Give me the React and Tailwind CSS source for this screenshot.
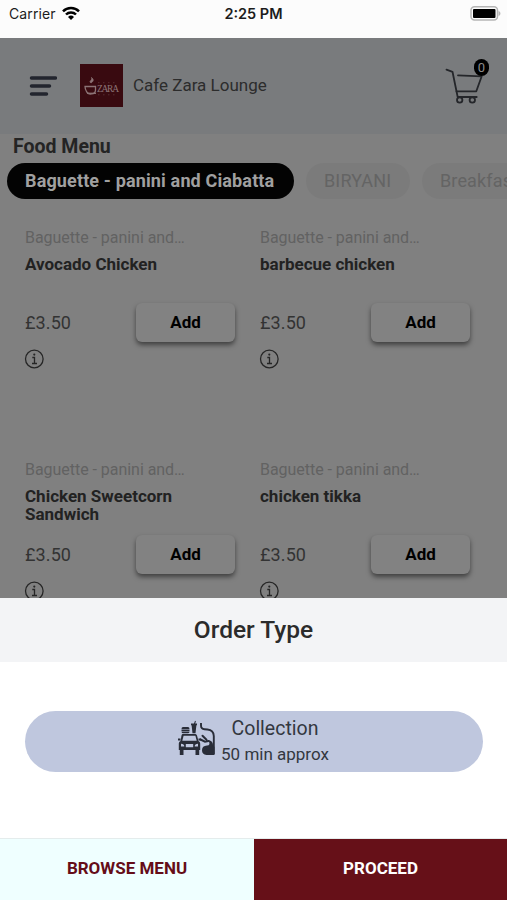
import React from 'react'

const categories = ['Baguette - panini and Ciabatta', 'BIRYANI', 'Breakfast']

const rows = [
  [
    { name: 'Avocado Chicken', price: '£3.50' },
    { name: 'barbecue chicken', price: '£3.50' }
  ],
  [
    { name: 'Chicken Sweetcorn Sandwich', price: '£3.50' },
    { name: 'chicken tikka', price: '£3.50' }
  ]
]

function StatusBar() {
  return (
    <div className="grid h-[38px] shrink-0 grid-cols-3 items-start bg-[#fcfcfc] pt-[5px] font-[Inter] text-[14px] leading-[18px] text-[#1c1c1c]">
      <div className="flex items-center gap-[6px] pl-[9px]">
        <span className="tracking-[0.1px]">Carrier</span>
        <svg viewBox="0 0 18 14" className="-mt-[3px] h-[14px] w-[18px]" fill="none" stroke="#000" strokeWidth="2.5">
          <path d="M1 5.300a11.300 11.300 0 0 1 16 0" />
          <path d="M4 8.500a7 7 0 0 1 10 0" />
          <path d="M9 14l-3-3.100a4.300 4.300 0 0 1 6 0z" fill="#000" stroke="none" />
        </svg>
      </div>
      <div className="text-center text-[14.5px] font-semibold whitespace-nowrap">2:25 PM</div>
      <div className="flex justify-end pt-[0.5px] pr-[6px]">
        <svg viewBox="0 0 31 15" className="h-[15px] w-[31px]">
          <rect x="1" y="0.8" width="26.500" height="13.200" rx="3.500" fill="#fcfcfc" stroke="#b5b5b5" strokeWidth="1.500" />
          <rect x="3" y="3" width="22.500" height="9" rx="1" fill="#000" />
          <path d="M28.500 5v5c1.600-.7 1.900-1.600 1.900-2.500s-.300-1.800-1.900-2.500z" fill="#b5b5b5" />
        </svg>
      </div>
    </div>
  )
}

function Logo() {
  return (
    <svg viewBox="0 0 43 43" className="ml-[23px] h-[43px] w-[43px]">
      <rect width="43" height="43" fill="#390a10" />
      <g fill="none" stroke="#8c7375" strokeWidth="1.300">
        <path d="M5 22.500h10.500v3.500c0 5-7.500 5-9 1.500-.8-1.500-1.500-3-1.500-5z" />
        <path d="M7 29.300h9" />
        <path d="M11 19c-3-2 2-2.500.500-5.500 3 2.500 1.500 4-.500 5.500z" fill="#8c7375" strokeWidth="0.8" />
      </g>
      <text x="17" y="28" textLength="22" fontFamily="Liberation Serif, serif" fontSize="9.500" fill="#8c7375">ZARA</text>
      <path d="M18 18.700h19M18 30.800h19" stroke="#5e363a" strokeWidth="0.8" strokeDasharray="1.500 3.500" />
    </svg>
  )
}

function Cart() {
  return (
    <div className="relative ml-auto h-[47px] w-[46px]">
      <svg viewBox="0 -1 46 47" className="h-[47px] w-[46px]" fill="none" stroke="#24262a" strokeWidth="1.800" strokeLinecap="round" strokeLinejoin="round">
        <path d="M1.500 6.600l6 2.200L11.500 28.300l1.200 5.700h19" />
        <path d="M13 12.300l23.700 1-5.400 15H11.500" />
        <circle cx="14.700" cy="37" r="2.700" />
        <circle cx="27.300" cy="37" r="2.700" />
      </svg>
      <div className="absolute top-[-3px] left-[29px] flex h-[17px] w-[15px] items-center justify-center rounded-full bg-black text-[13px] text-[#8c8c8c]">0</div>
    </div>
  )
}

function InfoIcon() {
  return (
    <svg viewBox="0 0 20 20" className="mt-[7px] -ml-px h-[20px] w-[20px]" fill="none" stroke="#262626" strokeWidth="1.300">
      <circle cx="10.300" cy="10" r="8.800" />
      <path d="M8.300 8.500h2.200v5.800M8 14.500h5" />
      <circle cx="10.300" cy="5.600" r="1.100" fill="#262626" stroke="none" />
    </svg>
  )
}

function MenuItem({ item }) {
  return (
    <div className="flex h-[232px] w-[235px] flex-col">
      <div className="text-[16px] leading-[20px] tracking-[-0.04px] text-[#626262]">Baguette - panini and…</div>
      <div className="mt-[7px] h-[48px] w-[180px] text-[17px] leading-[18px] font-bold text-[#222]">{item.name}</div>
      <div className="flex items-center">
        <div className="w-[111px] text-[18px] tracking-[0.1px] text-[#333]">{item.price}</div>
        <button className="h-[39px] w-[99px] rounded-[6px] bg-[#828282] text-[17px] font-bold text-black shadow-[0_3px_5px_rgba(0,0,0,0.5)]">
          Add
        </button>
      </div>
      <InfoIcon />
    </div>
  )
}

function CollectionIcon() {
  return (
    <svg viewBox="0 0 38 36" className="mb-[8px] h-[36px] w-[38px]" fill="#292d38">
      <path d="M4.500 9q0-2 1.500-2h5q1.500 0 1.500 2zM4.500 9.600h8v1.300h-8zM4.500 11.500h8q0 1.800-1.300 1.800H5.800q-1.300 0-1.300-1.800z" />
      <path d="M14 3.500h3L18 .8l.9.400-.7 2.300H20v1.800h-.6l-.9 8h-3l-.9-8H14z" />
      <path
        fillRule="evenodd"
        d="M5.500 14h13q1 0 1.500 1.500l1.500 5.500q1.700.7 1.700 2.500v6.500h-1v5h-3.700v-5H6.500v5H2.800v-5h-1v-6.500q0-1.800 1.700-2.500L4.500 15.500q.300-1.500 1-1.500zM6.600 15.700l-1.300 5.100h14.400l-1.300-5.100zM4 23.700v2.800h3.300q0-2.800-3.300-2.800zM21 23.700q-3.300 0-3.300 2.800H21zM8.800 24v3.300h7.400V24z"
      />
      <path d="M1 18.500h2.500v2H1zM21.500 18.500H24v2h-2.500z" />
      <path d="M24 3v2.500q0 3.500 3.500 3.700l3 .300q6 .500 6.300 6.500v18" fill="none" stroke="#292d38" strokeWidth="1.900" />
      <path d="M23.500 19.500l4.500 2.200 3.500-.7M25.500 15.800l4 4" fill="none" stroke="#292d38" strokeWidth="2" strokeLinecap="round" />
      <path d="M31.500 20q4.500 1 4.500 5l1.500 2v8H29.500q-4.500-.5-4.500-4.800t5-4.700q2 0 2.500-1.500-.2-2-1-4z" />
    </svg>
  )
}

function OrderSheet() {
  return (
    <div className="flex h-[302px] shrink-0 flex-col bg-white">
      <div className="flex h-[64px] items-center justify-center bg-[#f3f4f6] text-[24.5px] font-medium text-[#2b2b2b]">Order Type</div>
      <div className="flex flex-1 flex-col px-[25px] pt-[49px]">
        <button className="flex h-[61px] w-[458px] items-center rounded-full bg-[#bfc7de] pl-[152px] text-[#333740]">
          <CollectionIcon />
          <div className="ml-[6px] w-[108px] text-center whitespace-nowrap">
            <div className="text-[19.5px] leading-[26px]">Collection</div>
            <div className="text-[17px] leading-[25px]">50 min approx</div>
          </div>
        </button>
      </div>
      <div className="flex h-[62px] border-t border-[#e4ecec] text-[17px] font-bold">
        <button className="w-[254px] bg-[#efffff] pb-[2px] text-[#650d18]">BROWSE MENU</button>
        <button className="flex-1 bg-[#661018] pb-[2px] text-white">PROCEED</button>
      </div>
    </div>
  )
}

export default function App() {
  return (
    <div className="flex h-[900px] w-[507px] flex-col overflow-hidden bg-[#808080] font-[Roboto,sans-serif]">
      <StatusBar />
      <header className="flex h-[96px] shrink-0 items-center bg-[#797b7d] pr-[16px] pb-[1px] pl-[29px]">
        <svg viewBox="0 0 28 22" className="h-[22px] w-[28px]" stroke="#22252e" strokeWidth="3.500" strokeLinecap="round">
          <path d="M2.500 3H26.500M2.500 11h18M2.500 19h15" />
        </svg>
        <Logo />
        <div className="ml-[10px] text-[17px] text-[#2c2c2c]">Cafe Zara Lounge</div>
        <Cart />
      </header>
      <main className="flex h-[464px] shrink-0 flex-col overflow-hidden">
        <h1 className="h-[29px] shrink-0 pl-[13px] text-[19.5px] leading-[25px] font-bold text-[#242424]">Food Menu</h1>
        <div className="flex shrink-0 gap-[12px] overflow-hidden pl-[7px] text-[18px] tracking-[0.14px]">
          {categories.map((label, i) => (
            <div
              key={label}
              className={`h-[36px] shrink-0 rounded-full px-[18px] leading-[35px] whitespace-nowrap ${i === 0 ? 'w-[287px] bg-[#030303] font-bold text-[#a0a0a0]' : 'min-w-[104px] bg-[#7b7b7b] text-[#646464]'}`}
            >
              {label}
            </div>
          ))}
        </div>
        <div className="flex flex-col pt-[29px] pl-[25px]">
          {rows.map((row, i) => (
            <div key={i} className="flex">
              {row.map(item => (
                <MenuItem key={item.name} item={item} />
              ))}
            </div>
          ))}
        </div>
      </main>
      <OrderSheet />
    </div>
  )
}
